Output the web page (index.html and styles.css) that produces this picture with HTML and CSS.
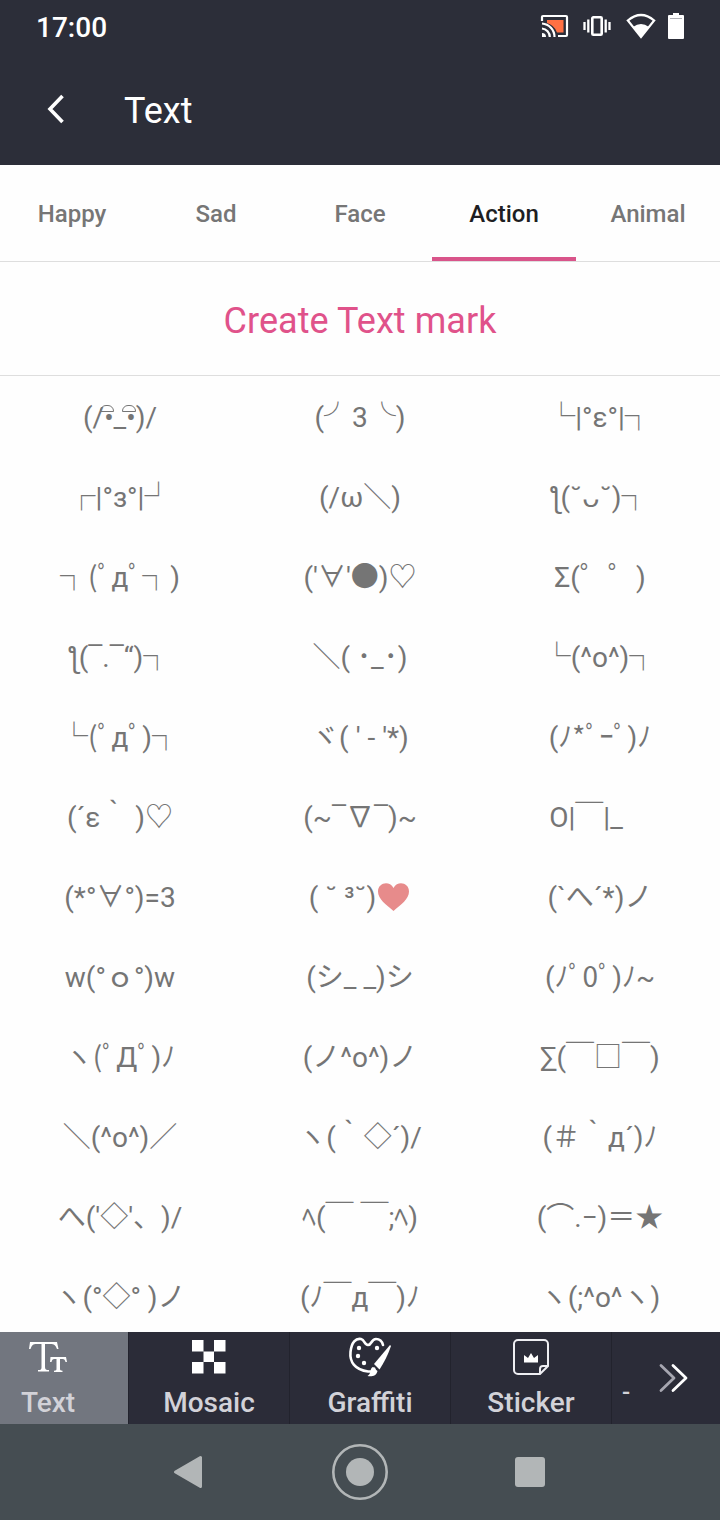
FILE: index.html
```html
<!DOCTYPE html>
<html lang="en">
<head>
<meta charset="UTF-8">
<meta name="viewport" content="width=device-width, initial-scale=1.0">
<title>Text</title>
<link rel="stylesheet" href="styles.css">
</head>
<body>
  <header class="header">
    <div class="status">
      <span class="time">17:00</span>
      <div class="status-icons">
        <svg width="30" height="26" viewBox="0 0 30 26">
          <path d="M7 7h16.500v12.500H17A15 15 0 0 0 7 10z" fill="#ff7043"/>
          <path d="M2 8V4a1 1 0 0 1 1-1h23a1 1 0 0 1 1 1v18a1 1 0 0 1-1 1h-8" fill="none" stroke="#fff" stroke-width="2.200"/>
          <path d="M2 10.500A13.500 13.500 0 0 1 14.500 24M2 15.500A8.500 8.500 0 0 1 9.800 24" fill="none" stroke="#fff" stroke-width="2.200"/>
          <path d="M2 20v4h4A4 4 0 0 0 2 20z" fill="#fff"/>
        </svg>
        <svg class="vibrate" width="28" height="24" viewBox="0 0 28 24">
          <rect x="9.300" y="3.300" width="9.400" height="17.400" rx="1" fill="none" stroke="#fff" stroke-width="2.600"/>
          <path d="M1.500 8v8M5.300 5.500v13M22.700 5.500v13M26.500 8v8" stroke="#fff" stroke-width="2.300"/>
        </svg>
        <svg class="wifi" width="30" height="26" viewBox="0 0 30 26">
          <path d="M1.800 7.500Q15-3.500 28.200 7.500L15 24z" fill="none" stroke="#fff" stroke-width="2.200"/>
          <path d="M7 14Q15 8 23 14L15 24z" fill="#fff"/>
        </svg>
        <svg class="battery" width="16" height="26" viewBox="0 0 16 26">
          <path d="M5 0h6v2h4a1 1 0 0 1 1 1v22a1 1 0 0 1-1 1H1a1 1 0 0 1-1-1V3a1 1 0 0 1 1-1h4z" fill="#fff"/>
          <path d="M2 5.500h12" stroke="#8b8c93" stroke-width=".7"/>
        </svg>
      </div>
    </div>
    <div class="toolbar">
      <svg class="back" width="20" height="32" viewBox="0 0 20 32">
        <path d="M16.500 3L4 16l12.500 13" fill="none" stroke="#fff" stroke-width="3.600"/>
      </svg>
      <h1 class="title">Text</h1>
    </div>
  </header>

  <nav class="tabs">
    <a class="tab">Happy</a>
    <a class="tab">Sad</a>
    <a class="tab">Face</a>
    <a class="tab active">Action</a>
    <a class="tab">Animal</a>
  </nav>

  <div class="create">Create Text mark</div>

  <main class="grid">
    <div>(/<span class="eye">•</span>_<span class="eye">•</span>)/</div>
    <div>(╯3╰)</div>
    <div>└|°ε°|┐</div>
    <div>┌|°з°|┘</div>
    <div>(/ω＼)</div>
    <div>ƪ(˘ᴗ˘)┐</div>
    <div>┐(ﾟдﾟ┐)</div>
    <div>('∀'●)♡</div>
    <div>Σ(゜゜)</div>
    <div>ƪ(‾.‾“)┐</div>
    <div>＼( ･_･)</div>
    <div>└(^o^)┐</div>
    <div>└(ﾟдﾟ)┐</div>
    <div>ヾ( ' - '*)</div>
    <div>(ﾉ*ﾟｰﾟ)ﾉ</div>
    <div>(´ε｀ )♡</div>
    <div>(~‾∇‾)~</div>
    <div>O|￣|_　</div>
    <div>(*°∀°)=3</div>
    <div>( ˘ ³˘)<svg class="heart" width="35" height="30" viewBox="0 0 35 30"><path d="M17.500 29C10 22.500 2 17 2 9.500C2 1 13-2 17.500 6C22-2 33 1 33 9.500C33 17 25 22.500 17.500 29z" fill="#e78b8b"/></svg></div>
    <div>(`へ´*)ノ</div>
    <div>w(°ｏ°)w</div>
    <div>(シ_ _)シ</div>
    <div>(ﾉﾟ0ﾟ)ﾉ~</div>
    <div>ヽ(ﾟДﾟ)ﾉ</div>
    <div>(ノ^o^)ノ</div>
    <div>∑(￣□￣)</div>
    <div>＼(^o^)／</div>
    <div>ヽ(｀◇´)/</div>
    <div>(＃｀д´)ﾉ</div>
    <div>へ('◇'、)/</div>
    <div>ﾍ(￣ ￣;ﾍ)</div>
    <div>(⌒.−)＝★</div>
    <div>ヽ(°◇° )ノ</div>
    <div>(ﾉ￣д￣)ﾉ</div>
    <div>ヽ(;^o^ヽ)</div>
  </main>

  <footer class="tools">
    <a class="tool text selected">
      <svg width="42" height="34" viewBox="0 0 42 34" fill="#fff">
        <path d="M3 2h27l1.500 7H30c-1.500-4-3-5-6.500-5H18v23c0 2.500 1 3 4 3v1.500H11V30c3 0 3.500-.5 3.500-3V4H9.500C6 4 5 5 3.500 9H2z"/>
        <path d="M23.500 17h15.500l1 5h-1.500c-.5-2-1-3-3-3H33v9.500c0 2 .5 2 2.500 2.300V32h-8.500v-1.200c2-.3 2.500-.3 2.500-2.300V19h-2c-2 0-2.500 1-3 3H23z"/>
      </svg>
      <span>Text</span>
    </a>
    <a class="tool">
      <svg width="34" height="34" viewBox="0 0 34 34" fill="#fff">
        <path d="M0 0h11.500v11.500H0zM22 0h11.500v11.500H22zM11.500 11.500H22V22H11.500zM0 22h11.500v11.500H0zM22 22h11.500v11.500H22z"/>
      </svg>
      <span>Mosaic</span>
    </a>
    <a class="tool">
      <svg width="44" height="42" viewBox="0 0 44 42" fill="none" stroke="#fff">
        <path d="M20 35.500C7 34 1.500 26 2.500 16C3.500 6 8 2 13 3C17 4 16 9 20 9C24 9 23 3 28 3C31 3 34 5 35 9M20 35.500C24 35.500 28 36 26 32.500" stroke-width="2.600" stroke-linecap="round"/>
        <path d="M42 9L26 28l5.500 5.500Q39 22 43 10z" fill="#fff" stroke="none"/>
        <path d="M24.500 31l5 4c-1 5-6 6-10 5c4-2 2-7 5-9z" fill="#fff" stroke="none"/>
        <g fill="#fff" stroke="none"><circle cx="11" cy="12" r="2.200"/><circle cx="10" cy="20" r="2.200"/><circle cx="16" cy="27" r="2.200"/><circle cx="29" cy="12" r="2.200"/></g>
      </svg>
      <span>Graffiti</span>
    </a>
    <a class="tool">
      <svg width="38" height="38" viewBox="0 0 38 38" fill="none" stroke="#eeeef2" stroke-width="2">
        <path d="M28 36H6a4 4 0 0 1-4-4V6a4 4 0 0 1 4-4h26a4 4 0 0 1 4 4v22zM28 36v-5a3 3 0 0 1 3-3h5"/>
        <path d="M12 17l4 3 3-5 3 5 4-3v7.500H12z" fill="#fff" stroke="none"/>
      </svg>
      <span>Sticker</span>
    </a>
    <a class="more">
      <span>-</span>
      <svg width="30" height="30" viewBox="0 0 30 30" fill="none" stroke-width="2.800" stroke-linecap="round" stroke-linejoin="round">
        <path d="M3 2.500L16 15 3 27.500" stroke="#a6a6b0"/>
        <path d="M15 2.500L28 15 15 27.500" stroke="#fff"/>
      </svg>
    </a>
  </footer>

  <div class="navbar">
    <svg width="30" height="34" viewBox="0 0 30 34"><path d="M27.500 2.500v29L2.500 17z" fill="#b2b6b7" stroke="#b2b6b7" stroke-width="3" stroke-linejoin="round"/></svg>
    <svg width="56" height="56" viewBox="0 0 56 56"><circle cx="28" cy="28" r="26.700" fill="none" stroke="#b2b6b7" stroke-width="2.600"/><circle cx="28" cy="28" r="14" fill="#b2b6b7"/></svg>
    <span class="recent"></span>
  </div>
</body>
</html>
```
FILE: styles.css
```css
* {
  box-sizing: border-box;
}

body {
  margin: 0;
  width: 720px;
  height: 1520px;
  background: #fefefe;
  font-family: Roboto, "Noto Sans CJK JP", "Noto Sans", "DejaVu Sans", sans-serif;
  color: #757575;
  overflow: hidden;
}

svg {
  display: block;
  flex: none;
}

.header {
  height: 165px;
  background: #2c2e39;
  color: #fff;
}

.status {
  height: 56px;
  padding: 0 36px 2px 36px;
  display: flex;
  justify-content: space-between;
  align-items: center;
}

.time {
  font-size: 28px;
  font-weight: 500;
}

.status-icons {
  display: flex;
  align-items: center;
  margin-top: -2px;
}

.vibrate {
  margin-left: 13px;
}

.wifi {
  margin-left: 15px;
}

.battery {
  margin-left: 12px;
}

.toolbar {
  height: 109px;
  display: flex;
  align-items: center;
  padding-left: 46px;
}

.back {
  margin-top: -3px;
}

.title {
  margin: 0 0 0 58px;
  font-size: 36px;
  font-weight: 400;
}

.tabs {
  height: 97px;
  display: grid;
  grid-template-columns: repeat(5, 1fr);
  border-bottom: 1px solid #dedede;
}

.tab {
  text-align: center;
  font-size: 24px;
  font-weight: 500;
  line-height: 98px;
  height: 96px;
  color: #767676;
}

.active {
  color: #1e1e22;
  border-bottom: 4px solid #d9548a;
}

.create {
  height: 114px;
  line-height: 118px;
  text-align: center;
  font-size: 36px;
  letter-spacing: 0.06px;
  color: #e0528a;
  border-bottom: 1px solid #dedede;
}

.grid {
  height: 956px;
  display: grid;
  grid-template-columns: repeat(3, 240px);
  grid-auto-rows: 80px;
  overflow: hidden;
}

.grid div {
  display: flex;
  justify-content: center;
  height: 80px;
  line-height: 84px;
  font-size: 28px;
  white-space: pre;
  text-spacing-trim: space-all;
}

/* little brow drawn over each dot */
.eye {
  position: relative;
}

.eye::after {
  content: "";
  position: absolute;
  left: -4px;
  top: 29px;
  width: 12px;
  height: 5px;
  border: 1px solid #757575;
  border-radius: 6px 6px 0 0;
}

.heart {
  margin-top: 26px;
}

.tools {
  height: 92px;
  display: flex;
  background: #2b2c38;
  color: #d2d2d8;
  font-size: 28px;
  font-weight: 500;
}

.tool {
  width: 161px;
  border-right: 1px solid #22232d;
  display: grid;
  grid-template-rows: 50px 40px;
  justify-items: center;
  align-items: center;
}

.text {
  width: 129px;
  padding-right: 32px;
}

.selected {
  background: #72767f;
}

.more {
  flex: 1;
  display: flex;
  align-items: center;
  padding-left: 10px;
}

.more span {
  width: 36px;
  margin-top: 28px;
  font-size: 24px;
}

.navbar {
  height: 96px;
  background: #454d52;
  display: flex;
  align-items: center;
  padding-left: 173px;
  gap: 127px;
}

.navbar svg:first-child {
  margin-right: 2px;
}

.recent {
  width: 30px;
  height: 30px;
  border-radius: 3px;
  background: #b2b6b7;
}
```
